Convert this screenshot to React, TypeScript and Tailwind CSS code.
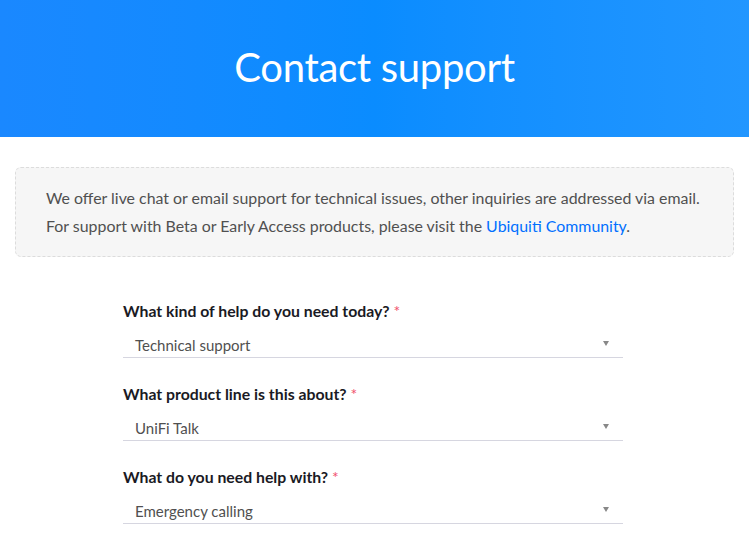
import React from 'react';

const fields = [
  { label: 'What kind of help do you need today?', value: 'Technical support' },
  { label: 'What product line is this about?', value: 'UniFi Talk' },
  { label: 'What do you need help with?', value: 'Emergency calling' },
];

const App: React.FC = () => {
  return (
    <div className="min-h-screen bg-white" style={{ fontFamily: 'Lato, "Open Sans", sans-serif' }}>
      <header className="h-[137px] flex items-center justify-center pb-[4px] bg-gradient-to-r from-[#1a88ff] via-[#0a8cff] to-[#2196ff]">
        <h1 className="text-white text-[40px] font-normal tracking-[-0.3px] leading-none">Contact support</h1>
      </header>

      <div className="px-[15px] pt-[30px]">
        <div className="rounded-md border border-dashed border-[#dcdcdc] bg-[#f6f6f6] pl-[30px] pr-[8px] py-[16px] text-[15.9px] leading-[28px] text-[#505050] whitespace-nowrap">
          <p>We offer live chat or email support for technical issues, other inquiries are addressed via email.</p>
          <p>
            For support with Beta or Early Access products, please visit the{' '}
            <a className="text-[#006fff]">Ubiquiti Community</a>.
          </p>
        </div>
      </div>

      <form className="w-[500px] ml-[123px] mt-[44px] flex flex-col gap-[26px]">
        {fields.map((f) => (
          <div key={f.label}>
            <label className="block text-[15.8px] font-bold text-[#1a1a24] leading-[20px]">
              {f.label} <span className="text-[#f0506e] font-normal">*</span>
            </label>
            <div className="mt-[15px] h-[22px] flex items-center justify-between border-b border-[#d6d6e0] pl-[12px] pr-[14px]">
              <span className="text-[15px] text-[#505050] leading-none pb-[2px]">{f.value}</span>
              <svg width="6" height="5" viewBox="0 0 6 5" className="mb-[6px]">
                <path d="M0 0h6L3 5z" fill="#888" />
              </svg>
            </div>
          </div>
        ))}
      </form>
    </div>
  );
};

export default App;
